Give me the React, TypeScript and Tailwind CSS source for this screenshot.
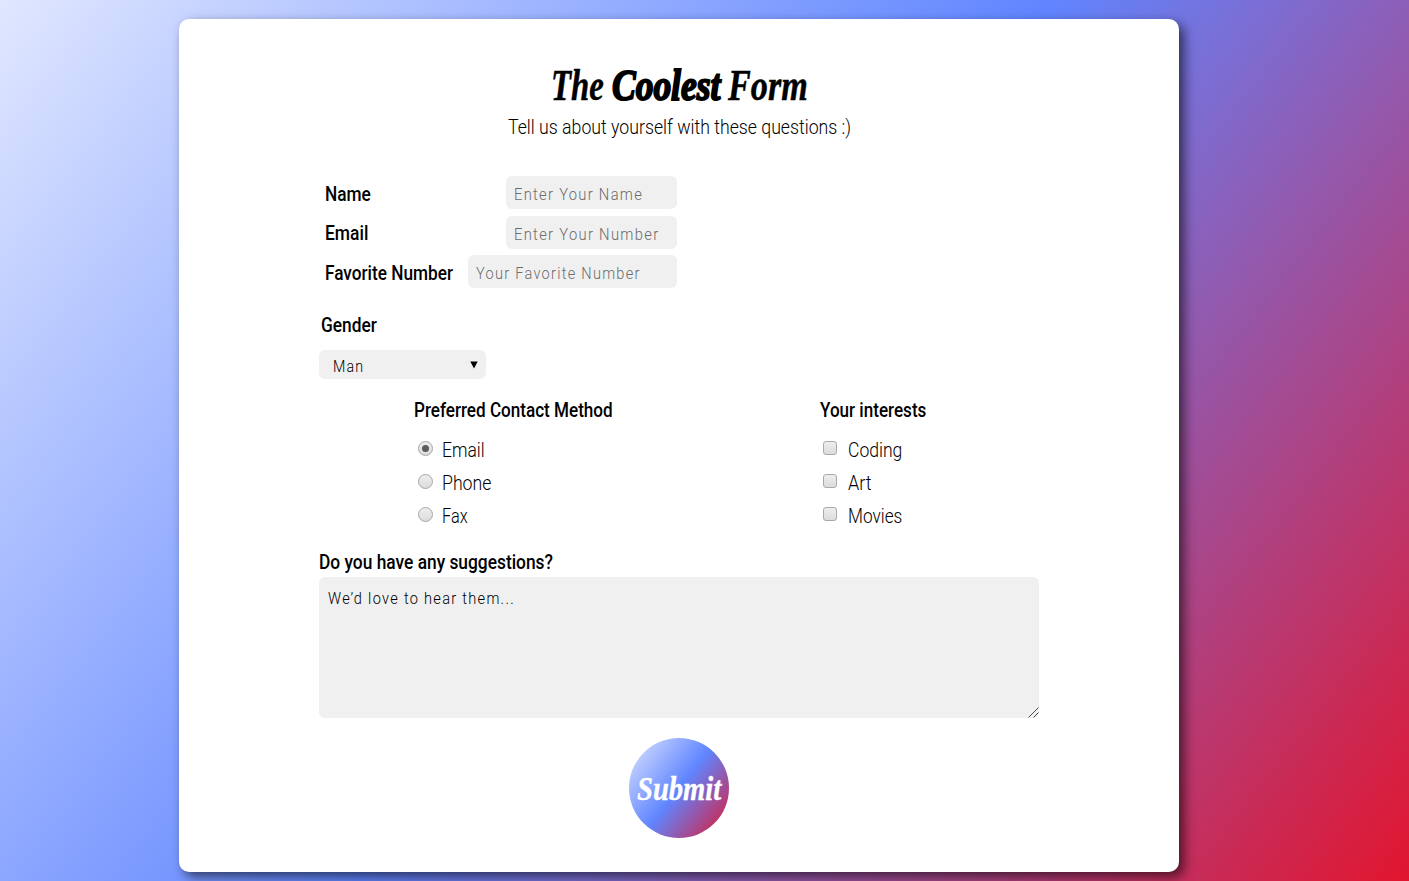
import { useLayoutEffect, useRef, useState } from "react";
import type { ReactNode } from "react";

const sans = "font-['Roboto','Noto_Sans',sans-serif]";
const script = "font-['Liberation_Serif',serif] font-bold italic";

/** A single line of text condensed horizontally to the given width. */
function Fit({ width, className = "", children }: { width: number; className?: string; children: ReactNode }) {
  const ref = useRef<HTMLSpanElement>(null);
  const [scale, setScale] = useState(1);
  useLayoutEffect(() => {
    const measure = () => {
      if (ref.current && ref.current.offsetWidth) setScale(width / ref.current.offsetWidth);
    };
    measure();
    document.fonts.ready.then(measure);
  }, [width]);
  return (
    <span className="inline-flex shrink-0" style={{ width }}>
      <span
        ref={ref}
        className={"inline-block shrink-0 origin-left whitespace-nowrap " + className}
        style={{ transform: `scaleX(${scale})` }}
      >
        {children}
      </span>
    </span>
  );
}

const label = "text-[19.5px] leading-[30px] font-medium translate-y-px";
const option = "text-[19.5px] leading-[33px] font-light";
const field = "text-[17px] leading-[33px] font-light translate-y-px";

function Field({ name, nameWidth, hint, hintWidth, box }: { name: string; nameWidth: number; hint: string; hintWidth: number; box: string }) {
  return (
    <div className="flex h-[33px] w-[352px] items-center justify-between">
      <Fit width={nameWidth} className={label + " pt-[2px]"}>{name}</Fit>
      <div className={"flex h-[33px] items-center rounded-md bg-[#f0f0f0] pt-[2px] pl-[8px] text-[#6c6c6c] " + box}>
        <Fit width={hintWidth} className={field + " tracking-[1.5px]"}>{hint}</Fit>
      </div>
    </div>
  );
}

function Radio({ checked, name, width }: { checked?: boolean; name: string; width: number }) {
  return (
    <label className="flex h-[33px] items-center">
      <span className="mb-[2px] flex size-[15px] items-center justify-center rounded-full border border-[#a6a6a6] bg-linear-to-b from-[#eeeeee] to-[#dcdcdc]">
        {checked && <span className="size-[7px] rounded-full bg-[#5c5c5c]" />}
      </span>
      <span className="ml-[9px] flex pt-px"><Fit width={width} className={option}>{name}</Fit></span>
    </label>
  );
}

function Check({ name, width }: { name: string; width: number }) {
  return (
    <label className="flex h-[33px] items-center">
      <span className="mb-[3px] size-[14px] rounded-[3px] border border-[#a9a9a9] bg-linear-to-b from-[#eeeeee] to-[#dcdcdc]" />
      <span className="ml-[11px] flex pt-px"><Fit width={width} className={option}>{name}</Fit></span>
    </label>
  );
}

export default function App() {
  return (
    <div className={"h-[881px] overflow-hidden bg-[linear-gradient(128deg,#e0e7ff_0%,#6085ff_50%,#e2152e_100%)] pt-[19px] pl-[179px] text-black " + sans}>
      <main className="flex h-[853px] w-[1000px] flex-col rounded-[10px] bg-white px-[140px] pt-[44px] shadow-[5px_5px_12px_rgba(0,0,0,0.6)]">
        <h1 className={"flex h-[46px] justify-center gap-[8px] text-[44px] leading-[46px] [-webkit-text-stroke:0.5px_black] " + script}>
          <Fit width={53}>The</Fit>
          <Fit width={108} className="[-webkit-text-stroke:2px_black]">Coolest</Fit>
          <Fit width={80}>Form</Fit>
        </h1>
        <p className="flex h-[36px] items-center justify-center">
          <Fit width={343} className="translate-y-px text-[19.5px] leading-[36px] font-light">Tell us about yourself with these questions :)</Fit>
        </p>

        <div className="mt-[31px] flex flex-col gap-[6.5px] pl-[6px]">
          <Field name="Name" nameWidth={46} hint="Enter Your Name" hintWidth={129} box="w-[171px]" />
          <Field name="Email" nameWidth={43} hint="Enter Your Number" hintWidth={145} box="w-[171px]" />
          <Field name="Favorite Number" nameWidth={128} hint="Your Favorite Number" hintWidth={165} box="w-[209px]" />
        </div>

        <div className="mt-[22px] flex pl-[2px]"><Fit width={56} className={label}>Gender</Fit></div>
        <div className="mt-[10px] flex h-[29px] w-[167px] items-center justify-between rounded-md bg-[#f0f0f0] pr-[8px] pl-[14px]">
          <span className="flex pt-[3px]"><Fit width={31} className="text-[17px] leading-[26px] font-light tracking-[1.3px]">Man</Fit></span>
          <svg width="8" height="8" viewBox="0 0 8 8"><path d="M0.3 0.5h7.4L4 7.5z" fill="#000" /></svg>
        </div>

        <div className="mt-[16px] flex h-[140px]">
          <section className="w-[406px] pl-[95px]">
            <div className="flex"><Fit width={199} className={label}>Preferred Contact Method</Fit></div>
            <div className="mt-[8px] pl-[4px]">
              <Radio checked name="Email" width={43} />
              <Radio name="Phone" width={49} />
              <Radio name="Fax" width={26} />
            </div>
          </section>
          <section className="pl-[95px]">
            <div className="flex"><Fit width={106} className={label}>Your interests</Fit></div>
            <div className="mt-[8px] pl-[3px]">
              <Check name="Coding" width={54} />
              <Check name="Art" width={24} />
              <Check name="Movies" width={54} />
            </div>
          </section>
        </div>

        <div className="mt-[12px] flex h-[30px]"><Fit width={234} className={label}>Do you have any suggestions?</Fit></div>
        <div className="flex h-[141px] w-[720px] items-start justify-between rounded-md bg-[#f0f0f0] pt-[4px] pl-[9px]">
          <Fit width={187} className={field + " tracking-[1.5px]"}>We’d love to hear them...</Fit>
          <svg className="self-end" width="12" height="12" viewBox="0 0 12 12" stroke="#4a4a4a" strokeWidth="1">
            <path d="M1.5 11.5L11.5 1.5M6.5 11.5L11.5 6.5" />
          </svg>
        </div>

        <button className={"mt-[20px] flex size-[100px] shrink-0 items-center justify-center self-center rounded-full bg-[linear-gradient(128deg,#e0e7ff_0%,#6085ff_50%,#e2152e_100%)] text-[33px] leading-[36px] text-white [-webkit-text-stroke:0.4px_white] " + script}>
          <Fit width={84} className="translate-y-px">Submit</Fit>
        </button>
      </main>
    </div>
  );
}
